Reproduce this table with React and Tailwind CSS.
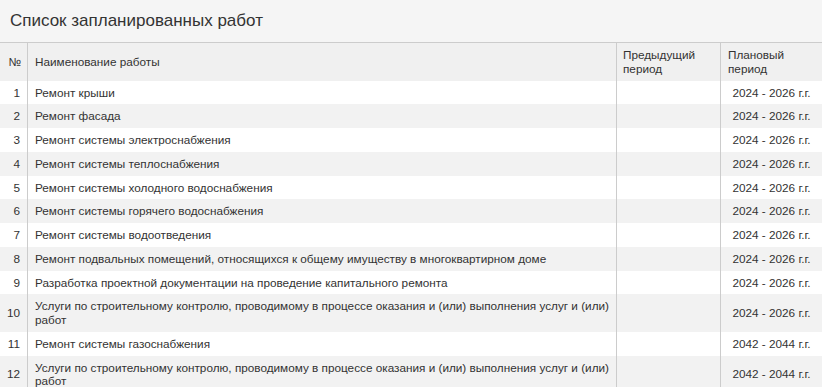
import React from "react";

const rows = [
  ["1", "Ремонт крыши", "2024 - 2026 г.г."],
  ["2", "Ремонт фасада", "2024 - 2026 г.г."],
  ["3", "Ремонт системы электроснабжения", "2024 - 2026 г.г."],
  ["4", "Ремонт системы теплоснабжения", "2024 - 2026 г.г."],
  ["5", "Ремонт системы холодного водоснабжения", "2024 - 2026 г.г."],
  ["6", "Ремонт системы горячего водоснабжения", "2024 - 2026 г.г."],
  ["7", "Ремонт системы водоотведения", "2024 - 2026 г.г."],
  ["8", "Ремонт подвальных помещений, относящихся к общему имуществу в многоквартирном доме", "2024 - 2026 г.г."],
  ["9", "Разработка проектной документации на проведение капитального ремонта", "2024 - 2026 г.г."],
  ["10", "Услуги по строительному контролю, проводимому в процессе оказания и (или) выполнения услуг и (или) работ", "2024 - 2026 г.г."],
  ["11", "Ремонт системы газоснабжения", "2042 - 2044 г.г."],
  ["12", "Услуги по строительному контролю, проводимому в процессе оказания и (или) выполнения услуг и (или) работ", "2042 - 2044 г.г."],
];

export default function App() {
  return (
    <div className="w-[822px] h-[387px] overflow-hidden bg-white text-[#333] font-['Liberation_Sans',Arial,sans-serif]">
      <div className="h-[43px] bg-[#f5f5f5] border-b border-[#cccccc] pl-[10px] pt-[11px] text-[17px] leading-[20px] text-[#333]">
        Список запланированных работ
      </div>
      <div className="grid grid-cols-[28px_589px_104px_101px] text-[11.75px] leading-[13.75px]">
        <div className="bg-[#f0f0f0] border-r border-[#cccccc] pr-[6px] py-[5px] flex items-center justify-end">№</div>
        <div className="bg-[#f0f0f0] border-r border-[#cccccc] px-[7px] py-[5px] flex items-center">Наименование работы</div>
        <div className="bg-[#f0f0f0] border-r border-[#cccccc] px-[6px] py-[5px]">Предыдущий<br />период</div>
        <div className="bg-[#f0f0f0] px-[7px] py-[5px]">Плановый<br />период</div>
        {rows.map(([n, name, period], i) => {
          const bg = i % 2 === 0 ? "bg-white" : "bg-[#f2f2f2]";
          return (
            <React.Fragment key={n}>
              <div className={`${bg} border-r border-[#cccccc] pr-[7px] py-[5px] flex items-center justify-end`}>{n}</div>
              <div className={`${bg} border-r border-[#cccccc] pl-[7px] pr-[6px] py-[5px] flex items-center`}>{name}</div>
              <div className={`${bg} border-r border-[#cccccc] py-[5px]`}></div>
              <div className={`${bg} py-[5px] flex items-center justify-center`}>{period}</div>
            </React.Fragment>
          );
        })}
      </div>
    </div>
  );
}
